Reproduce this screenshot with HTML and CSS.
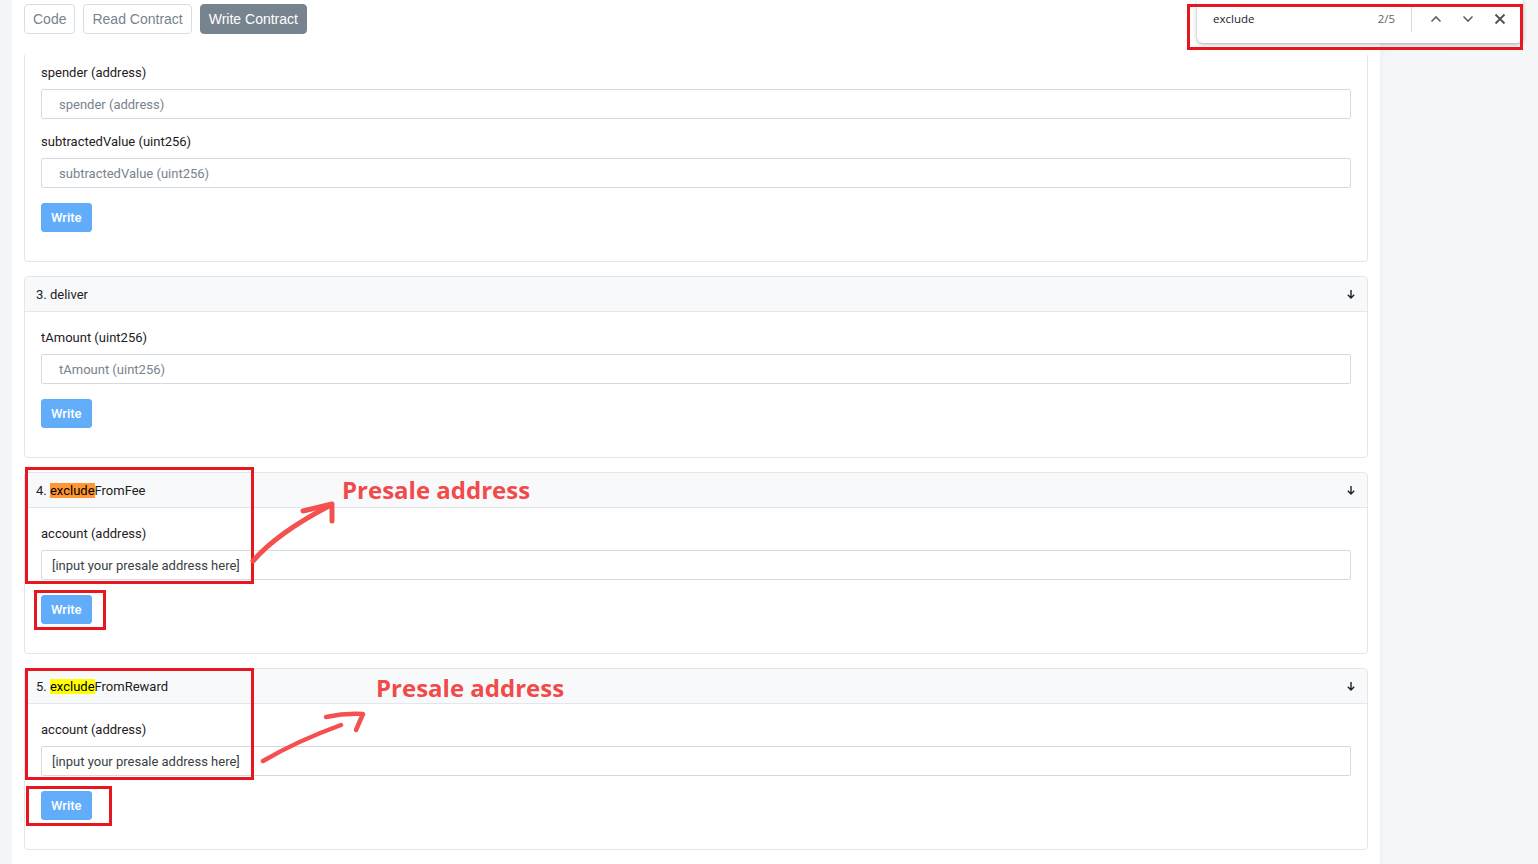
FILE: index.html
```html
<!DOCTYPE html>
<html>
<head>
<meta charset="utf-8">
<link rel="stylesheet" href="styles.css">
</head>
<body>
<div class="page">
  <div class="gutter"></div>
  <main class="main">
    <nav class="tabs">
      <button class="tab">Code</button>
      <button class="tab">Read Contract</button>
      <button class="tab tab-active">Write Contract</button>
    </nav>

    <section class="card card-cut">
      <div class="card-body">
        <div class="field">
          <label class="field-label">spender (address)</label>
          <input class="field-input" placeholder="spender (address)">
        </div>
        <div class="field">
          <label class="field-label">subtractedValue (uint256)</label>
          <input class="field-input" placeholder="subtractedValue (uint256)">
        </div>
        <button class="btn-write">Write</button>
      </div>
    </section>

    <section class="card">
      <header class="card-header">
        <span class="card-title">3. deliver</span>
        <svg class="arrow-down" viewBox="0 0 10 10" width="10" height="10"><path d="M5 1 V9 M1.8 5.8 L5 9 L8.2 5.8" fill="none" stroke="#1e2022" stroke-width="1.4"/></svg>
      </header>
      <div class="card-body">
        <div class="field">
          <label class="field-label">tAmount (uint256)</label>
          <input class="field-input" placeholder="tAmount (uint256)">
        </div>
        <button class="btn-write">Write</button>
      </div>
    </section>

    <section class="card">
      <header class="card-header">
        <span class="card-title">4. <mark class="hl-active">exclude</mark>FromFee</span>
        <svg class="arrow-down" viewBox="0 0 10 10" width="10" height="10"><path d="M5 1 V9 M1.8 5.8 L5 9 L8.2 5.8" fill="none" stroke="#1e2022" stroke-width="1.4"/></svg>
      </header>
      <div class="card-body">
        <div class="field">
          <label class="field-label">account (address)</label>
          <input class="field-input field-filled" value="[input your presale address here]">
        </div>
        <button class="btn-write">Write</button>
      </div>
      <div class="anno-box box-a"></div>
      <div class="anno-box box-b"></div>
      <div class="anno-text text-a">Presale address</div>
      <svg class="anno-arrow" width="400" height="120" viewBox="0 0 400 120">
        <path d="M228 88 Q252 60 306 32" fill="none" stroke="#f55050" stroke-width="5" stroke-linecap="round"/>
        <path d="M278 38 L307 31 L307 48" fill="none" stroke="#f55050" stroke-width="5" stroke-linecap="round" stroke-linejoin="round"/>
      </svg>
    </section>

    <section class="card">
      <header class="card-header">
        <span class="card-title">5. <mark class="hl">exclude</mark>FromReward</span>
        <svg class="arrow-down" viewBox="0 0 10 10" width="10" height="10"><path d="M5 1 V9 M1.8 5.8 L5 9 L8.2 5.8" fill="none" stroke="#1e2022" stroke-width="1.4"/></svg>
      </header>
      <div class="card-body">
        <div class="field">
          <label class="field-label">account (address)</label>
          <input class="field-input field-filled" value="[input your presale address here]">
        </div>
        <button class="btn-write">Write</button>
      </div>
      <div class="anno-box box-c"></div>
      <div class="anno-box box-d"></div>
      <div class="anno-text text-b">Presale address</div>
      <svg class="anno-arrow" width="400" height="120" viewBox="0 0 400 120">
        <path d="M238 92 Q272 72 316 56" fill="none" stroke="#f55050" stroke-width="4.5" stroke-linecap="round"/>
        <path d="M301 48 Q320 44 338 45 L331 61" fill="none" stroke="#f55050" stroke-width="4.5" stroke-linecap="round" stroke-linejoin="round"/>
      </svg>
    </section>
  </main>
  <div class="side"></div>

  <div class="findbar">
    <span class="find-query">exclude</span>
    <span class="find-count">2/5</span>
    <span class="find-divider"></span>
    <span class="find-btn"><svg viewBox="0 0 12 8" width="12" height="8"><path d="M1.5 6.5 L6 2 L10.5 6.5" fill="none" stroke="#5f6368" stroke-width="1.6"/></svg></span>
    <span class="find-btn"><svg viewBox="0 0 12 8" width="12" height="8"><path d="M1.5 1.5 L6 6 L10.5 1.5" fill="none" stroke="#5f6368" stroke-width="1.6"/></svg></span>
    <span class="find-btn"><svg viewBox="0 0 12 12" width="12" height="12"><path d="M1.5 1.5 L10.5 10.5 M10.5 1.5 L1.5 10.5" fill="none" stroke="#4d5156" stroke-width="1.8"/></svg></span>
  </div>
  <div class="find-outline"></div>
</div>
</body>
</html>
```

FILE: styles.css
```css
html, body {
  margin: 0;
  padding: 0;
  height: 864px;
  overflow: hidden;
  background: #f5f6f8;
  font-family: Roboto, "Liberation Sans", sans-serif;
  color: #1e2022;
}

.page {
  position: relative;
  display: flex;
  height: 864px;
}

.gutter {
  width: 12px;
  background: #f4f5f7;
  flex: none;
}

.main {
  width: 1368px;
  flex: none;
  box-sizing: border-box;
  padding: 0 12px;
  background: #ffffff;
}

.side {
  flex: 1;
  background: linear-gradient(to right, #eef0f3 0, #f5f6f8 6px, #f6f7f9 100%);
}

/* tabs */
.tabs {
  display: flex;
  gap: 8px;
  padding-top: 4px;
  height: 55px;
  box-sizing: border-box;
}

.tab {
  height: 30px;
  padding: 0 8px;
  border: 1px solid #d9dde3;
  border-radius: 4px;
  background: #fff;
  color: #77838f;
  font-family: "Liberation Sans", Arial, sans-serif;
  font-size: 14px;
  line-height: 28px;
  margin: 0;
}

.tab-active {
  background: #77838f;
  border-color: #77838f;
  color: #fff;
}

/* cards */
.card {
  position: relative;
  border: 1px solid #e3e6ea;
  border-radius: 4px;
  background: #fff;
  margin-bottom: 14px;
}

.card-cut {
  border-top: none;
  border-top-left-radius: 0;
  border-top-right-radius: 0;
}

.card-cut .card-body {
  padding-top: 7px;
}

.card-header {
  height: 34px;
  display: flex;
  align-items: center;
  justify-content: space-between;
  padding: 0 11px;
  background: #f8f9fa;
  border-bottom: 1px solid #e3e6ea;
  border-radius: 4px 4px 0 0;
}

.card-title {
  font-size: 13px;
  color: #1e2022;
}

.hl, .hl-active {
  color: #000;
  padding: 0;
}

.hl { background: #ffff00; }
.hl-active { background: #ff9632; }

.arrow-down {
  display: block;
}

.card-body {
  padding: 15px 16px 29px 16px;
}

.field {
  margin-bottom: 12px;
}

.field-label {
  display: block;
  font-size: 13px;
  line-height: 21px;
  margin-bottom: 6px;
  color: #1e2022;
}

.field-input {
  display: block;
  width: 100%;
  height: 30px;
  box-sizing: border-box;
  border: 1px solid #d5dae2;
  border-radius: 2px;
  padding: 0 17px;
  font-family: Roboto, "Liberation Sans", sans-serif;
  font-size: 13px;
  color: #3a3f45;
  background: #fff;
  outline: none;
}

.field-input::placeholder {
  color: #77838f;
}

.field-filled {
  padding-left: 10px;
}

.btn-write {
  display: block;
  margin-top: 15px;
  height: 29px;
  padding: 0 9px;
  border: 1px solid #5fabf9;
  border-radius: 3px;
  background: #62adfa;
  color: #fff;
  font-family: Roboto, "Liberation Sans", sans-serif;
  font-weight: 500;
  font-size: 13px;
}

/* annotations */
.anno-box {
  position: absolute;
  border: 3px solid #e8161f;
  box-sizing: border-box;
  pointer-events: none;
}

.box-a { left: 0; top: -6px; width: 229px; height: 117px; }
.box-b { left: 9px; top: 117px; width: 72px; height: 40px; }
.box-c { left: 0; top: -1px; width: 229px; height: 112px; }
.box-d { left: 1px; top: 117px; width: 86px; height: 40px; }

.anno-text {
  position: absolute;
  font-family: "Open Sans", Roboto, sans-serif;
  font-weight: 700;
  font-size: 24px;
  line-height: 24px;
  color: #f24a4a;
  white-space: nowrap;
}

.text-a { left: 317px; top: 5px; }
.text-b { left: 351px; top: 7px; }

.anno-arrow {
  position: absolute;
  left: 0;
  top: 0;
  overflow: visible;
  pointer-events: none;
}

/* find bar */
.findbar {
  position: absolute;
  left: 1197px;
  top: 0;
  width: 326px;
  height: 43px;
  box-sizing: border-box;
  background: #fff;
  border-radius: 0 0 6px 6px;
  box-shadow: 0 1px 3px rgba(60, 64, 67, 0.3), 0 2px 6px rgba(60, 64, 67, 0.15);
  display: flex;
  align-items: center;
  padding: 0 7px 5px 16px;
  font-family: "Open Sans", "Noto Sans", sans-serif;
  font-size: 11.5px;
}

.find-query {
  flex: 1;
  color: #202124;
  position: relative;
  top: -1px;
}

.find-count {
  color: #5f6368;
  position: relative;
  top: -1px;
}

.find-divider {
  width: 1px;
  height: 26px;
  background: #dadce0;
  margin: 0 8px 0 16px;
}

.find-btn {
  width: 32px;
  height: 32px;
  display: flex;
  align-items: center;
  justify-content: center;
}

.find-outline {
  position: absolute;
  left: 1187px;
  top: 4px;
  width: 336px;
  height: 46px;
  box-sizing: border-box;
  border: 3px solid #e8161f;
  pointer-events: none;
}
```
